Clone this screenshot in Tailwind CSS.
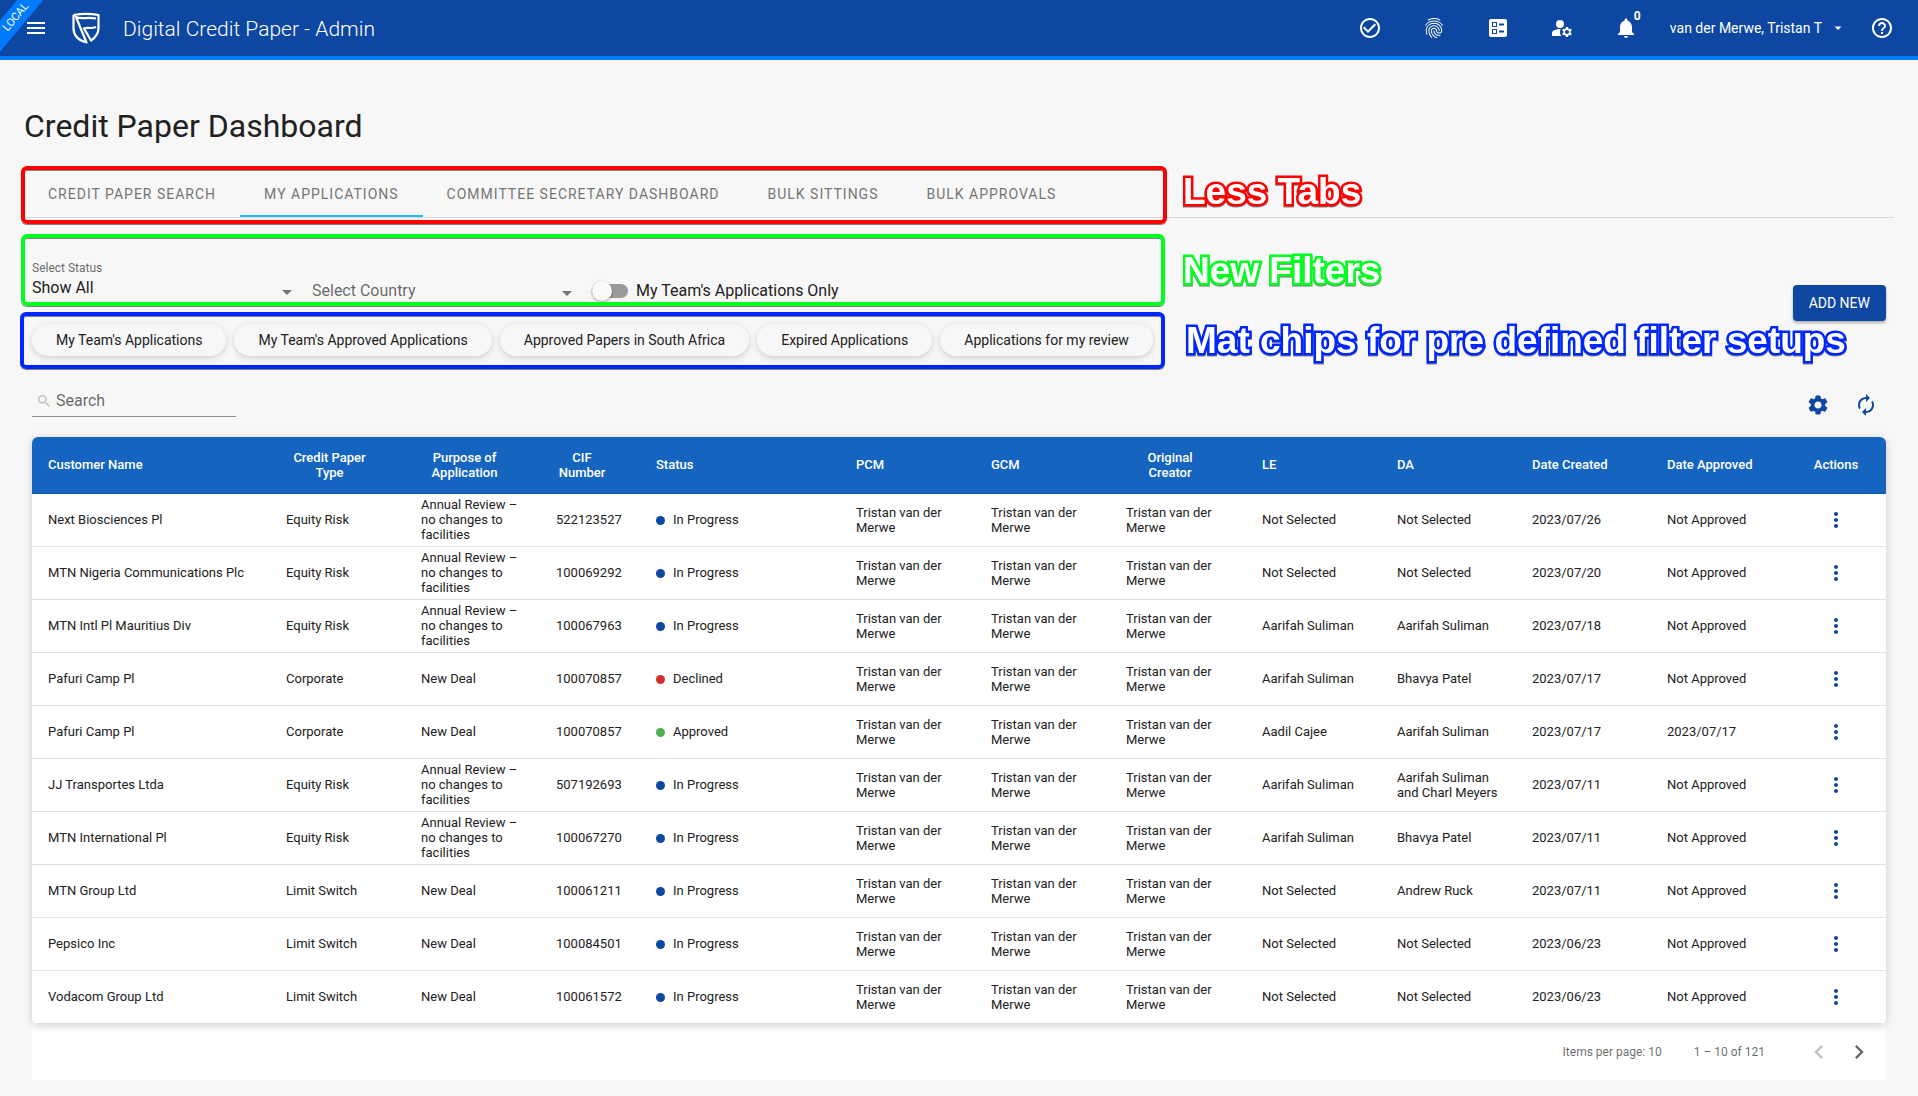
<!DOCTYPE html>
<html lang="en">
<head>
<meta charset="utf-8">
<meta name="viewport" content="width=device-width, initial-scale=1">
<title>Digital Credit Paper - Admin</title>
<script src="https://cdn.jsdelivr.net/npm/@tailwindcss/browser@4"></script>
</head>
<body class="relative min-h-screen overflow-x-hidden bg-[#f7f7f7] font-['Roboto',sans-serif] text-[#212121]">

<header class="relative flex h-[60px] items-center overflow-hidden border-b-4 border-[#007bff] bg-[#0d47a1] px-6 text-white">
  <div class="absolute -left-8 top-[7px] h-5 w-24 -rotate-50 bg-[#007bff] text-center text-[11px] leading-5">LOCAL</div>
  <button type="button" aria-label="Menu" class="relative">
    <svg class="size-6" viewBox="0 0 24 24" fill="currentColor"><path d="M3 18h18v-2H3v2zm0-5h18v-2H3v2zm0-7v2h18V6H3z"/></svg>
  </button>
  <svg class="ml-6 h-8 w-7" viewBox="0 0 28 32" fill="none" stroke="currentColor" stroke-width="2.2" stroke-linejoin="round">
    <path d="M1.500 3Q14 0.600 26.500 3V16C26.500 23 22 26.500 19 28.500L12 16.500C16 14.500 18 17.500 24 15"/>
    <path d="M1.500 3V16C1.500 24 7 28.500 14.500 30.500L4 5C10 8 14 4.500 24 6.500"/>
  </svg>
  <div class="ml-[23px] pt-1 text-[21px] font-light">Digital Credit Paper - Admin</div>
  <div class="ml-auto flex items-center">
    <div class="mr-8 flex items-center gap-10">
      <button type="button" aria-label="Approvals"><svg class="size-6" viewBox="0 0 24 24" fill="currentColor"><path d="M16.590 7.580L10 14.170l-3.590-3.580L5 12l5 5 8-8zM12 2C6.480 2 2 6.480 2 12s4.480 10 10 10 10-4.480 10-10S17.520 2 12 2zm0 18c-4.420 0-8-3.580-8-8s3.580-8 8-8 8 3.580 8 8-3.580 8-8 8z"/></svg></button>
      <button type="button" aria-label="Identity"><svg class="size-6" viewBox="0 0 24 24" fill="currentColor"><path d="M17.810 4.470c-.08 0-.16-.02-.23-.06C15.660 3.420 14 3 12.010 3c-1.980 0-3.860.47-5.570 1.410-.24.13-.54.04-.68-.2-.13-.24-.04-.55.2-.68C7.820 2.520 9.860 2 12.010 2c2.130 0 3.990.47 6.030 1.520.25.13.34.43.21.67-.09.18-.26.28-.44.28zM3.500 9.720c-.1 0-.2-.03-.29-.09-.23-.16-.28-.47-.12-.7.99-1.400 2.250-2.500 3.750-3.270C9.980 4.040 14 4.030 17.150 5.650c1.500.77 2.760 1.860 3.750 3.250.16.22.11.54-.12.7-.23.16-.54.11-.7-.12-.9-1.260-2.040-2.250-3.390-2.940-2.870-1.470-6.540-1.470-9.400.01-1.360.7-2.500 1.700-3.400 2.960-.08.14-.23.21-.39.21zm6.250 12.070c-.13 0-.26-.05-.35-.15-.87-.87-1.340-1.430-2.010-2.640-.69-1.230-1.050-2.730-1.050-4.340 0-2.970 2.540-5.390 5.660-5.390s5.660 2.420 5.660 5.390c0 .28-.22.5-.5.5s-.5-.22-.5-.5c0-2.420-2.090-4.390-4.660-4.390-2.570 0-4.660 1.970-4.660 4.390 0 1.440.32 2.770.93 3.850.64 1.150 1.080 1.640 1.850 2.420.19.2.19.51 0 .71-.11.1-.24.15-.37.15zm7.170-1.850c-1.190 0-2.240-.3-3.100-.89-1.490-1.010-2.380-2.650-2.380-4.390 0-.28.22-.5.5-.5s.5.22.5.5c0 1.410.72 2.740 1.940 3.560.71.48 1.540.71 2.540.71.24 0 .64-.03 1.040-.1.27-.05.53.13.58.41.05.27-.13.53-.41.58-.57.11-1.070.12-1.210.12zM14.910 22c-.04 0-.09-.01-.13-.02-1.590-.44-2.630-1.030-3.720-2.100-1.400-1.390-2.170-3.240-2.170-5.220 0-1.620 1.380-2.940 3.080-2.940 1.700 0 3.080 1.320 3.080 2.940 0 1.070.93 1.940 2.080 1.940s2.080-.87 2.080-1.940c0-3.770-3.250-6.830-7.250-6.830-2.840 0-5.440 1.580-6.610 4.030-.39.81-.59 1.760-.59 2.800 0 .78.07 2.010.67 3.610.1.26-.03.55-.29.64-.26.1-.55-.04-.64-.29-.49-1.310-.73-2.610-.73-3.960 0-1.200.23-2.290.68-3.240 1.330-2.790 4.280-4.600 7.510-4.600 4.550 0 8.250 3.510 8.250 7.830 0 1.620-1.380 2.940-3.080 2.940s-3.080-1.320-3.080-2.940c0-1.070-.93-1.940-2.080-1.940s-2.080.87-2.080 1.940c0 1.710.66 3.310 1.870 4.510.95.94 1.860 1.460 3.270 1.850.27.07.42.35.35.61-.05.23-.26.38-.47.38z"/></svg></button>
      <button type="button" aria-label="Ballot"><svg class="size-6" viewBox="0 0 24 24" fill="currentColor"><path d="M13 9.500h5v-2h-5v2zm0 7h5v-2h-5v2zm6 4.500H5c-1.100 0-2-.9-2-2V5c0-1.100.9-2 2-2h14c1.100 0 2 .9 2 2v14c0 1.100-.9 2-2 2zM6 11h5V6H6v5zm1-4h3v3H7V7zM6 18h5v-5H6v5zm1-4h3v3H7v-3z"/></svg></button>
      <button type="button" aria-label="Manage accounts"><svg class="size-6" viewBox="0 0 24 24" fill="currentColor"><circle cx="10" cy="8" r="4"/><path d="M10.670 13.020c-.22-.01-.44-.02-.67-.02-2.420 0-4.680.67-6.610 1.820-.88.52-1.390 1.500-1.390 2.530V20h9.260c-.79-1.130-1.260-2.510-1.260-4 0-1.070.25-2.070.67-2.980zM20.750 16c0-.22-.03-.42-.06-.63l1.140-1.010-1-1.730-1.450.49c-.32-.27-.68-.48-1.080-.63L18 11h-2l-.3 1.490c-.4.15-.76.36-1.080.63l-1.450-.49-1 1.730 1.140 1.010c-.03.21-.06.41-.06.63s.03.42.06.63l-1.140 1.010 1 1.730 1.450-.49c.32.27.68.48 1.080.63L16 21h2l.3-1.490c.4-.15.76-.36 1.080-.63l1.450.49 1-1.730-1.140-1.010c.03-.21.06-.41.06-.63zM17 18c-1.100 0-2-.9-2-2s.9-2 2-2 2 .9 2 2-.9 2-2 2z"/></svg></button>
      <button type="button" aria-label="Notifications" class="relative"><svg class="size-6" viewBox="0 0 24 24" fill="currentColor"><path d="M12 22c1.100 0 2-.9 2-2h-4c0 1.100.89 2 2 2zm6-6v-5c0-3.070-1.640-5.640-4.500-6.320V4c0-.83-.67-1.500-1.500-1.500s-1.500.67-1.500 1.500v.68C7.630 5.360 6 7.920 6 11v5l-2 2v1h16v-1l-2-2z"/></svg><span class="absolute -top-2 left-5 text-xs leading-4 font-bold">0</span></button>
    </div>
    <button type="button" class="flex items-center gap-1 text-sm">van der Merwe, Tristan T
      <svg class="size-6" viewBox="0 0 24 24" fill="currentColor"><path d="M8.500 10.500l3.500 3.500 3.500-3.500z"/></svg>
    </button>
    <button type="button" aria-label="Help" class="ml-5"><svg class="size-6" viewBox="0 0 24 24" fill="currentColor"><path d="M11 18h2v-2h-2v2zm1-16C6.480 2 2 6.480 2 12s4.480 10 10 10 10-4.480 10-10S17.520 2 12 2zm0 18c-4.410 0-8-3.590-8-8s3.590-8 8-8 8 3.590 8 8-3.590 8-8 8zm0-14c-2.210 0-4 1.790-4 4h2c0-1.100.9-2 2-2s2 .9 2 2c0 2-3 1.750-3 5h2c0-2.250 3-2.500 3-5 0-2.210-1.790-4-4-4z"/></svg></button>
  </div>
</header>

<main class="px-6 pt-[46px] pb-4">
  <h1 class="text-[32px] leading-10">Credit Paper Dashboard</h1>

  <div role="tablist" class="mt-[23px] flex h-[49px] border-b border-[#dadada] text-sm tracking-[1px] text-[#757575]">
    <button type="button" role="tab" class="px-6 pt-0.5">CREDIT PAPER SEARCH</button>
    <button type="button" role="tab" aria-selected="true" class="border-b-2 border-[#29b6f6] px-6 pt-1">MY APPLICATIONS</button>
    <button type="button" role="tab" class="px-6 pt-0.5">COMMITTEE SECRETARY DASHBOARD</button>
    <button type="button" role="tab" class="px-6 pt-0.5">BULK SITTINGS</button>
    <button type="button" role="tab" class="px-6 pt-0.5">BULK APPROVALS</button>
  </div>

  <div class="px-2">
    <div class="flex items-end gap-5 pt-[42px]">
      <div class="flex w-[260px] flex-col">
        <label for="status" class="text-xs leading-4 text-black/60">Select Status</label>
        <div class="flex items-center justify-between">
          <select id="status" class="grow appearance-none bg-transparent text-base leading-6 outline-none"><option>Show All</option></select>
          <svg class="mt-2 h-[5px] w-2.5" viewBox="0 0 10 5" fill="#757575"><path d="M0 0h10L5 5z"/></svg>
        </div>
      </div>
      <div class="flex w-[260px] items-center justify-between">
        <select aria-label="Select Country" class="grow appearance-none bg-transparent text-base leading-[18px] text-black/60 outline-none"><option>Select Country</option></select>
        <svg class="mt-1 h-[5px] w-2.5" viewBox="0 0 10 5" fill="#757575"><path d="M0 0h10L5 5z"/></svg>
      </div>
      <label class="flex items-center gap-2 text-base leading-[18px]">
        <input type="checkbox" class="relative h-3.5 w-9 appearance-none rounded-full bg-[#9a9a9a] before:absolute before:-top-[3px] before:left-0 before:size-5 before:rounded-full before:bg-[#fafafa] before:shadow-[0_1px_3px_rgba(0,0,0,0.4)]">
        My Team's Applications Only
      </label>
      <button type="button" class="-mb-[21px] ml-auto h-9 rounded bg-[#0d47a1] px-4 text-sm text-white shadow-[0_2px_3px_rgba(0,0,0,0.3)]">ADD NEW</button>
    </div>

    <div class="mt-6 flex gap-2 text-sm">
      <button type="button" class="h-8 rounded-full bg-[#f7f7f7] px-6 shadow-[0_2px_6px_rgba(0,0,0,0.16)]">My Team's Applications</button>
      <button type="button" class="h-8 rounded-full bg-[#f7f7f7] px-6 shadow-[0_2px_6px_rgba(0,0,0,0.16)]">My Team's Approved Applications</button>
      <button type="button" class="h-8 rounded-full bg-[#f7f7f7] px-6 shadow-[0_2px_6px_rgba(0,0,0,0.16)]">Approved Papers in South Africa</button>
      <button type="button" class="h-8 rounded-full bg-[#f7f7f7] px-6 shadow-[0_2px_6px_rgba(0,0,0,0.16)]">Expired Applications</button>
      <button type="button" class="h-8 rounded-full bg-[#f7f7f7] px-6 shadow-[0_2px_6px_rgba(0,0,0,0.16)]">Applications for my review</button>
    </div>

    <div class="mt-[29px] flex items-end justify-between">
      <label class="flex h-[31px] w-[204px] items-center gap-1 border-b border-[#8f8f8f] pl-1">
        <svg class="size-4 shrink-0" viewBox="0 0 24 24" fill="#bdbdbd"><path d="M15.500 14h-.79l-.28-.27C15.410 12.590 16 11.110 16 9.500 16 5.910 13.090 3 9.500 3S3 5.910 3 9.500 5.910 16 9.500 16c1.610 0 3.090-.59 4.230-1.570l.27.28v.79l5 4.990L20.490 19l-4.990-5zm-6 0C7.010 14 5 11.990 5 9.500S7.010 5 9.500 5 14 7.010 14 9.500 11.990 14 9.500 14z"/></svg>
        <input type="text" placeholder="Search" aria-label="Search" class="w-full bg-transparent text-base outline-none placeholder:text-black/60">
      </label>
      <div class="flex gap-6 pt-2 pr-2 text-[#0d47a1]">
        <button type="button" aria-label="Settings"><svg class="size-6" viewBox="0 0 24 24" fill="currentColor"><path d="M19.140 12.940c.04-.3.06-.61.06-.94 0-.32-.02-.64-.07-.94l2.030-1.580c.18-.14.23-.41.12-.61l-1.920-3.320c-.12-.22-.37-.29-.59-.22l-2.390.96c-.5-.38-1.030-.7-1.620-.94l-.36-2.540c-.04-.24-.24-.41-.48-.41h-3.840c-.24 0-.43.17-.47.41l-.36 2.540c-.59.24-1.130.57-1.620.94l-2.390-.96c-.22-.08-.47 0-.59.22L2.740 8.870c-.12.21-.08.47.12.61l2.030 1.580c-.05.3-.09.63-.09.94s.02.64.07.94l-2.030 1.580c-.18.14-.23.41-.12.61l1.920 3.320c.12.22.37.29.59.22l2.390-.96c.5.38 1.030.7 1.620.94l.36 2.540c.05.24.24.41.48.41h3.840c.24 0 .44-.17.47-.41l.36-2.540c.59-.24 1.130-.56 1.620-.94l2.390.96c.22.08.47 0 .59-.22l1.920-3.320c.12-.22.07-.47-.12-.61l-2.010-1.580zM12 15.600c-1.980 0-3.600-1.620-3.600-3.600s1.620-3.600 3.600-3.600 3.600 1.620 3.600 3.600-1.620 3.600-3.600 3.600z"/></svg></button>
        <button type="button" aria-label="Refresh"><svg class="size-6" viewBox="0 0 24 24" fill="currentColor"><path d="M12 6v3l4-4-4-4v3c-4.420 0-8 3.580-8 8 0 1.570.46 3.030 1.240 4.260L6.700 14.800c-.45-.83-.7-1.790-.7-2.800 0-3.310 2.690-6 6-6zm6.760 1.740L17.300 9.200c.44.84.7 1.790.7 2.800 0 3.310-2.690 6-6 6v-3l-4 4 4 4v-3c4.420 0 8-3.580 8-8 0-1.570-.46-3.030-1.240-4.260z"/></svg></button>
      </div>
    </div>

    <div class="mt-5 bg-white">
      <div class="overflow-hidden rounded-md bg-white shadow-[0_2px_8px_rgba(0,0,0,0.18)]">
        <table class="w-full table-fixed border-collapse text-left text-[13px] leading-[15px]">
          <colgroup>
            <col class="w-[238px]"><col class="w-[135px]"><col class="w-[135px]"><col class="w-[100px]"><col class="w-[200px]"><col class="w-[135px]"><col class="w-[135px]"><col class="w-[136px]"><col class="w-[135px]"><col class="w-[135px]"><col class="w-[135px]"><col class="w-[135px]"><col class="w-[100px]">
          </colgroup>
          <thead class="bg-[#1565c0] text-white">
            <tr class="h-14 border-b border-[#0d5ab0]">
              <th class="px-4 font-medium">Customer Name</th>
              <th class="pr-8 pl-4 text-center font-medium">Credit Paper Type</th>
              <th class="pr-8 pl-4 text-center font-medium">Purpose of Application</th>
              <th class="pr-8 pl-4 text-center font-medium">CIF Number</th>
              <th class="px-4 font-medium">Status</th>
              <th class="px-4 font-medium">PCM</th>
              <th class="px-4 font-medium">GCM</th>
              <th class="pr-8 pl-4 text-center font-medium">Original<br>Creator</th>
              <th class="px-4 font-medium">LE</th>
              <th class="px-4 font-medium">DA</th>
              <th class="px-4 font-medium">Date Created</th>
              <th class="px-4 font-medium">Date Approved</th>
              <th class="text-center font-medium">Actions</th>
            </tr>
          </thead>
          <tbody id="rows"></tbody>
        </table>
      </div>
      <div class="flex h-14 items-center justify-end pr-[13px] text-xs text-black/60">
        <span>Items per page: 10</span>
        <span class="ml-8">1 – 10 of 121</span>
        <button type="button" aria-label="Previous page" disabled class="ml-10 text-black/25"><svg class="size-7" viewBox="0 0 24 24" fill="currentColor"><path d="M15.410 7.410L14 6l-6 6 6 6 1.410-1.410L10.830 12z"/></svg></button>
        <button type="button" aria-label="Next page" class="ml-3"><svg class="size-7" viewBox="0 0 24 24" fill="currentColor"><path d="M10 6L8.590 7.410 13.170 12l-4.580 4.590L10 18l6-6z"/></svg></button>
      </div>
    </div>
  </div>
</main>

<!-- Review notes drawn over the page -->
<div class="pointer-events-none absolute top-[166px] left-[21px] h-[58px] w-[1146px] rounded-md border-4 border-[#ff0000] shadow-[0_1px_0_#808080,inset_0_1px_0_#808080]"></div>
<div class="pointer-events-none absolute top-[234px] left-[21px] h-[72px] w-[1144px] rounded-md border-4 border-[#00ff21] shadow-[0_1px_0_#808080,inset_0_1px_0_#808080]"></div>
<div class="pointer-events-none absolute top-[312px] left-[20px] h-[57px] w-[1145px] rounded-md border-4 border-[#0026ff] shadow-[0_1px_0_#808080,inset_0_1px_0_#808080]"></div>
<p class="pointer-events-none absolute top-[172px] left-[1183px] font-['Liberation_Sans',sans-serif] text-[37px] leading-10 font-bold whitespace-nowrap text-white drop-shadow-[0_1px_0_#808080] [-webkit-text-stroke:5px_#ff0000] [paint-order:stroke_fill]">Less Tabs</p>
<p class="pointer-events-none absolute top-[251px] left-[1183px] font-['Liberation_Sans',sans-serif] text-[37px] leading-10 font-bold whitespace-nowrap text-white drop-shadow-[0_1px_0_#808080] [-webkit-text-stroke:5px_#00ff21] [paint-order:stroke_fill]">New Filters</p>
<p class="pointer-events-none absolute top-[321px] left-[1186px] font-['Liberation_Sans',sans-serif] text-[37px] leading-10 font-bold whitespace-nowrap text-white drop-shadow-[0_1px_0_#808080] [-webkit-text-stroke:5px_#0026ff] [paint-order:stroke_fill]">Mat chips for pre defined filter setups</p>

<script>
const T = 'Tristan van der Merwe', N = 'Not Selected', A = 'Aarifah Suliman', R = 'Annual Review – no changes to facilities';
const P = ['In Progress', 'bg-[#0d47a1]'], D = ['Declined', 'bg-[#d32f2f]'], OK = ['Approved', 'bg-[#4caf50]'];
const data = [
  ['Next Biosciences Pl', 'Equity Risk', R, '522123527', P, N, N, '2023/07/26', 'Not Approved'],
  ['MTN Nigeria Communications Plc', 'Equity Risk', R, '100069292', P, N, N, '2023/07/20', 'Not Approved'],
  ['MTN Intl Pl Mauritius Div', 'Equity Risk', R, '100067963', P, A, A, '2023/07/18', 'Not Approved'],
  ['Pafuri Camp Pl', 'Corporate', 'New Deal', '100070857', D, A, 'Bhavya Patel', '2023/07/17', 'Not Approved'],
  ['Pafuri Camp Pl', 'Corporate', 'New Deal', '100070857', OK, 'Aadil Cajee', A, '2023/07/17', '2023/07/17'],
  ['JJ Transportes Ltda', 'Equity Risk', R, '507192693', P, A, 'Aarifah Suliman and Charl Meyers', '2023/07/11', 'Not Approved'],
  ['MTN International Pl', 'Equity Risk', R, '100067270', P, A, 'Bhavya Patel', '2023/07/11', 'Not Approved'],
  ['MTN Group Ltd', 'Limit Switch', 'New Deal', '100061211', P, N, 'Andrew Ruck', '2023/07/11', 'Not Approved'],
  ['Pepsico Inc', 'Limit Switch', 'New Deal', '100084501', P, N, N, '2023/06/23', 'Not Approved'],
  ['Vodacom Group Ltd', 'Limit Switch', 'New Deal', '100061572', P, N, N, '2023/06/23', 'Not Approved']
];
const cell = v => `<td class="px-4">${v}</td>`;
document.getElementById('rows').innerHTML = data.map(([name, type, purpose, cif, [status, dot], le, da, created, approved]) => `
  <tr class="h-[53px] border-b border-[#e0e0e0]">
    ${[name, type, purpose, cif].map(cell).join('')}
    <td class="px-4"><span class="flex items-center gap-2"><span class="mt-0.5 size-[9px] rounded-full ${dot}"></span>${status}</span></td>
    ${[T, T, T, le, da, created, approved].map(cell).join('')}
    <td class="text-center"><button type="button" aria-label="Row actions" class="align-middle text-[#0d47a1]"><svg class="size-6" viewBox="0 0 24 24" fill="currentColor"><path d="M12 8c1.100 0 2-.9 2-2s-.9-2-2-2-2 .9-2 2 .9 2 2 2zm0 2c-1.100 0-2 .9-2 2s.9 2 2 2 2-.9 2-2-.9-2-2-2zm0 6c-1.100 0-2 .9-2 2s.9 2 2 2 2-.9 2-2-.9-2-2-2z"/></svg></button></td>
  </tr>`).join('');
</script>
</body>
</html>
